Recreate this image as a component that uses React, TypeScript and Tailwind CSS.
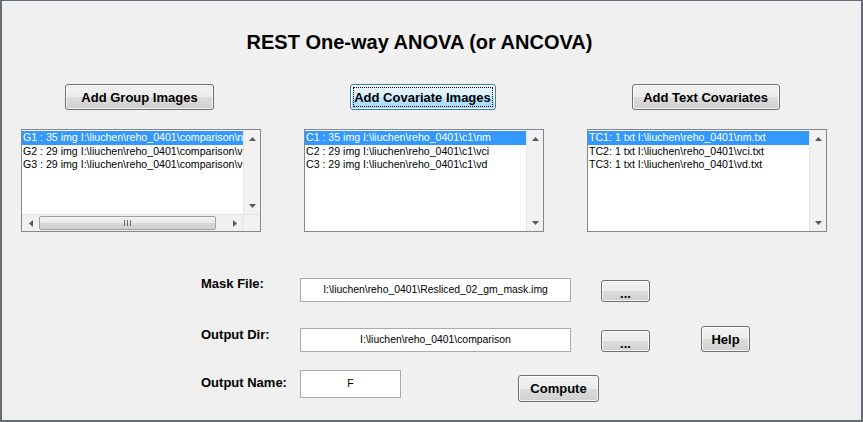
import React from 'react';
import clsx from 'clsx';

const groups = [
    'G1 : 35 img I:\\liuchen\\reho_0401\\comparison\\nm',
    'G2 : 29 img I:\\liuchen\\reho_0401\\comparison\\vci',
    'G3 : 29 img I:\\liuchen\\reho_0401\\comparison\\vd',
];
const covariates = [
    'C1 : 35 img I:\\liuchen\\reho_0401\\c1\\nm',
    'C2 : 29 img I:\\liuchen\\reho_0401\\c1\\vci',
    'C3 : 29 img I:\\liuchen\\reho_0401\\c1\\vd',
];
const textCovariates = [
    'TC1: 1 txt I:\\liuchen\\reho_0401\\nm.txt',
    'TC2: 1 txt I:\\liuchen\\reho_0401\\vci.txt',
    'TC3: 1 txt I:\\liuchen\\reho_0401\\vd.txt',
];

const Btn: React.FC<{ className?: string; focused?: boolean; children: React.ReactNode }> = ({ className, focused, children }) => (
    <button
        className={clsx(
            'relative flex items-center justify-center rounded-[3px] border text-[13px] font-bold text-black leading-none shadow-[inset_0_0_0_1px_rgba(255,255,255,0.75)]',
            focused
                ? 'border-[#3c7fb1] bg-[linear-gradient(#eaf6fd_0%,#d9f0fc_50%,#bee6fd_50%,#a7d9f5_100%)]'
                : 'border-[#707070] bg-[linear-gradient(#f2f2f2_0%,#ebebeb_50%,#dddddd_50%,#cfcfcf_100%)]',
            className
        )}
    >
        {children}
        {focused && <span className="absolute inset-[2px] border border-dotted border-black" />}
    </button>
);

const Arrow: React.FC<{ dir: 'up' | 'down' | 'left' | 'right' }> = ({ dir }) => {
    const pts = {
        up: '0,4 7,4 3.5,0',
        down: '0,0 7,0 3.5,4',
        left: '4,0 4,7 0,3.5',
        right: '0,0 0,7 4,3.5',
    }[dir];
    const vertical = dir === 'up' || dir === 'down';
    return (
        <svg width={vertical ? 7 : 4} height={vertical ? 4 : 7} viewBox={vertical ? '0 0 7 4' : '0 0 4 7'}>
            <polygon points={pts} fill="#5a5a5a" />
        </svg>
    );
};

const ListBox: React.FC<{ items: string[]; hscroll?: boolean }> = ({ items, hscroll }) => (
    <div className="w-[240px] h-[103px] border border-[#828790] bg-white flex flex-col">
        <div className="flex flex-1 min-h-0">
            <div className="flex-1 min-w-0 overflow-hidden text-[10.6px] leading-[13.5px] pt-[1px]">
                {items.map((t, i) => (
                    <div
                        key={t}
                        className={clsx('whitespace-nowrap pl-[1px] h-[13.5px]', i === 0 ? 'bg-[#3399ff] text-white' : 'text-black')}
                    >
                        {t}
                    </div>
                ))}
            </div>
            <div className="w-[17px] flex flex-col justify-between bg-[#f2f2f2] border-l border-[#e6e6e6]">
                <div className="h-[17px] flex items-center justify-center"><Arrow dir="up" /></div>
                <div className="h-[17px] flex items-center justify-center"><Arrow dir="down" /></div>
            </div>
        </div>
        {hscroll && (
            <div className="h-[17px] flex bg-[#f0f0f0] border-t border-[#e6e6e6]">
                <div className="w-[17px] flex items-center justify-center"><Arrow dir="left" /></div>
                <div className="w-[177px] my-[1px] rounded-[2px] border border-[#a0a0a0] bg-[linear-gradient(#f4f4f4_0%,#e8e8e8_50%,#d9d9d9_51%,#d0d0d0_100%)] flex items-center justify-center">
                    <svg width="7" height="6" viewBox="0 0 7 6">
                        <rect x="0" y="0" width="1" height="6" fill="#6a6a6a" />
                        <rect x="3" y="0" width="1" height="6" fill="#6a6a6a" />
                        <rect x="6" y="0" width="1" height="6" fill="#6a6a6a" />
                    </svg>
                </div>
                <div className="flex-1" />
                <div className="w-[17px] flex items-center justify-center"><Arrow dir="right" /></div>
                <div className="w-[17px] bg-[#f2f2f2] border-l border-[#e6e6e6]" />
            </div>
        )}
    </div>
);

const TextBox: React.FC<{ className?: string; value: string }> = ({ className, value }) => (
    <div className={clsx('flex items-center justify-center bg-white border border-[#ababab] text-[10.4px] text-black whitespace-nowrap', className)}>
        {value}
    </div>
);

export default function App() {
    return (
        <div className="w-[863px] h-[422px] bg-[#f0f0f0] border-t border-x-2 border-b-2 border-[#646c76] font-['Liberation_Sans',Arial,sans-serif] text-black overflow-hidden">
            <h1 className="pt-[30px] pr-[24px] text-center text-[20px] leading-[23px] font-bold">REST One-way ANOVA (or ANCOVA)</h1>

            <div className="mt-[30px] pl-[19px] flex gap-[43px]">
                <div className="flex flex-col items-center">
                    <Btn className="w-[149px] h-[26px] mr-[3px]">Add Group Images</Btn>
                    <div className="mt-[19px]"><ListBox items={groups} hscroll /></div>
                </div>
                <div className="flex flex-col items-center">
                    <Btn focused className="w-[146px] h-[26px] mr-[3px]">Add Covariate Images</Btn>
                    <div className="mt-[19px]"><ListBox items={covariates} /></div>
                </div>
                <div className="flex flex-col items-center">
                    <Btn className="w-[148px] h-[26px] mr-[3px]">Add Text Covariates</Btn>
                    <div className="mt-[19px]"><ListBox items={textCovariates} /></div>
                </div>
            </div>

            <div className="mt-[46px] pl-[199px]">
                <div className="flex items-start">
                    <div className="w-[99px] -mt-[2px] text-[13px] leading-[15px] font-bold">Mask File:</div>
                    <TextBox className="w-[271px] h-[24px]" value={'I:\\liuchen\\reho_0401\\Resliced_02_gm_mask.img'} />
                    <Btn className="ml-[30px] mt-[2px] w-[49px] h-[22px] pt-[5px]">...</Btn>
                </div>
                <div className="mt-[24px] flex items-start">
                    <div className="w-[99px] mt-[1px] text-[13px] leading-[15px] font-bold">Output Dir:</div>
                    <TextBox className="mt-[2px] w-[271px] h-[24px]" value={'I:\\liuchen\\reho_0401\\comparison'} />
                    <Btn className="ml-[30px] mt-[4px] w-[49px] h-[22px] pt-[5px]">...</Btn>
                    <Btn className="ml-[51px] w-[49px] h-[26px]">Help</Btn>
                </div>
                <div className="mt-[18px] flex items-start">
                    <div className="w-[99px] mt-[5px] text-[13px] leading-[15px] font-bold">Output Name:</div>
                    <TextBox className="w-[101px] h-[28px]" value="F" />
                    <Btn className="ml-[117px] mt-[5px] w-[81px] h-[27px]">Compute</Btn>
                </div>
            </div>
        </div>
    );
}
